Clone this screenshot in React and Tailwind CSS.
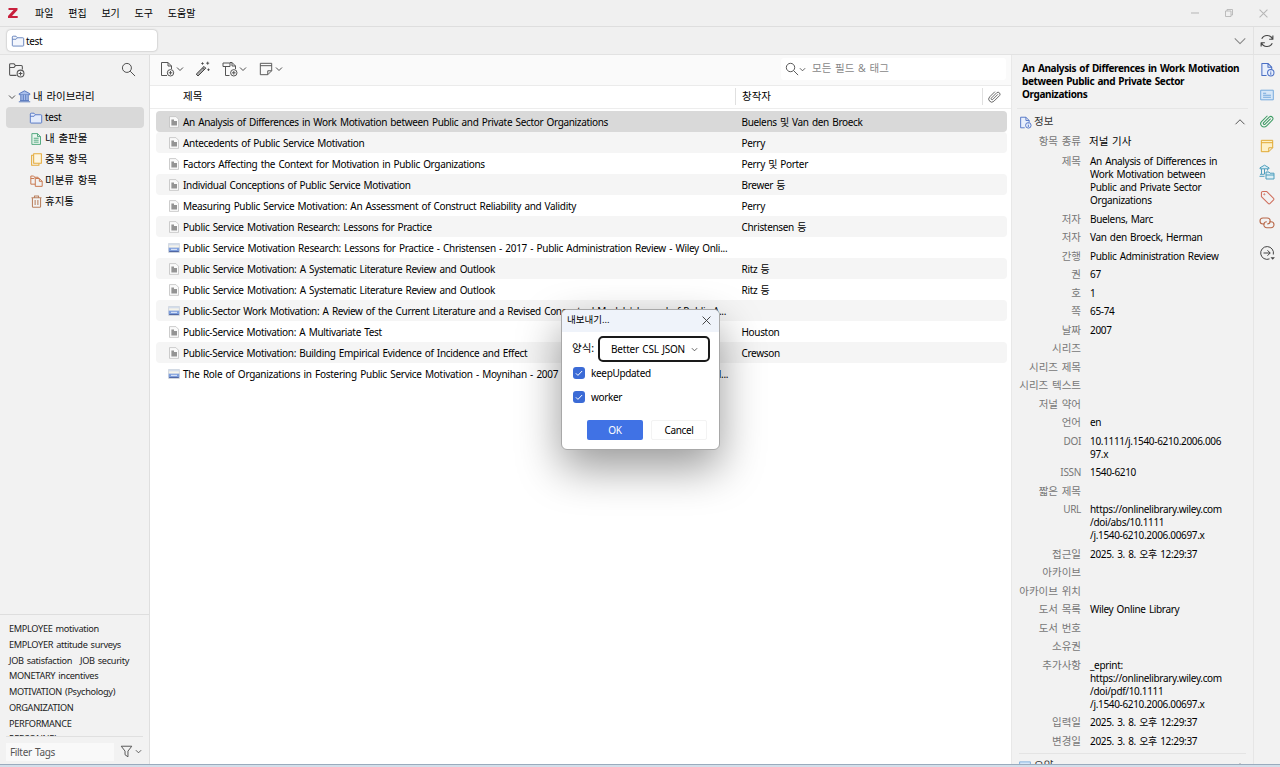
import React from 'react'

const ITEMS = [
    { title: 'An Analysis of Differences in Work Motivation between Public and Private Sector Organizations', creator: 'Buelens 및 Van den Broeck', selected: true },
    { title: 'Antecedents of Public Service Motivation', creator: 'Perry' },
    { title: 'Factors Affecting the Context for Motivation in Public Organizations', creator: 'Perry 및 Porter' },
    { title: 'Individual Conceptions of Public Service Motivation', creator: 'Brewer 등' },
    { title: 'Measuring Public Service Motivation: An Assessment of Construct Reliability and Validity', creator: 'Perry' },
    { title: 'Public Service Motivation Research: Lessons for Practice', creator: 'Christensen 등' },
    { title: 'Public Service Motivation Research: Lessons for Practice - Christensen - 2017 - Public Administration Review - Wiley Onli...', creator: '', web: true, spacing: 'tracking-[-0.300px]' },
    { title: 'Public Service Motivation: A Systematic Literature Review and Outlook', creator: 'Ritz 등' },
    { title: 'Public Service Motivation: A Systematic Literature Review and Outlook', creator: 'Ritz 등' },
    { title: 'Public-Sector Work Motivation: A Review of the Current Literature and a Revised Conceptual Model | Journal of Public A...', creator: '', web: true },
    { title: 'Public-Service Motivation: A Multivariate Test', creator: 'Houston' },
    { title: 'Public-Service Motivation: Building Empirical Evidence of Incidence and Effect', creator: 'Crewson' },
    { title: 'The Role of Organizations in Fostering Public Service Motivation - Moynihan - 2007 - Public Administration Review - Wil...', creator: '', web: true, spacing: 'tracking-[-0.275px]' },
]

const FIELDS = [
    ['제목', ['An Analysis of Differences in', 'Work Motivation between', 'Public and Private Sector', 'Organizations']],
    ['저자', ['Buelens, Marc']],
    ['저자', ['Van den Broeck, Herman']],
    ['간행', ['Public Administration Review']],
    ['권', ['67']],
    ['호', ['1']],
    ['쪽', ['65-74']],
    ['날짜', ['2007']],
    ['시리즈', ['']],
    ['시리즈 제목', ['']],
    ['시리즈 텍스트', ['']],
    ['저널 약어', ['']],
    ['언어', ['en']],
    ['DOI', ['10.1111/j.1540-6210.2006.006', '97.x']],
    ['ISSN', ['1540-6210']],
    ['짧은 제목', ['']],
    ['URL', ['https://onlinelibrary.wiley.com', '/doi/abs/10.1111', '/j.1540-6210.2006.00697.x']],
    ['접근일', ['2025. 3. 8. 오후 12:29:37']],
    ['아카이브', ['']],
    ['아카이브 위치', ['']],
    ['도서 목록', ['Wiley Online Library']],
    ['도서 번호', ['']],
    ['소유권', ['']],
    ['추가사항', ['_eprint:', 'https://onlinelibrary.wiley.com', '/doi/pdf/10.1111', '/j.1540-6210.2006.00697.x']],
    ['입력일', ['2025. 3. 8. 오후 12:29:37']],
    ['변경일', ['2025. 3. 8. 오후 12:29:37']],
]

const TAG_ROWS = [
    ['EMPLOYEE motivation'],
    ['EMPLOYER attitude surveys'],
    ['JOB satisfaction', 'JOB security'],
    ['MONETARY incentives'],
    ['MOTIVATION (Psychology)'],
    ['ORGANIZATION'],
    ['PERFORMANCE'],
    ['PERSONNEL'],
]

/* Icons */
const Svg = ({ size = 16, className = '', children }) => (
    <svg width={size} height={size} viewBox="0 0 16 16" fill="none" stroke="currentColor" strokeWidth="1" strokeLinejoin="round" className={`shrink-0 ${className}`}>
        {children}
    </svg>
)

const Chevron = ({ className = 'text-[#444]', size = 8 }) => (
    <Svg size={size} className={className}><path d="M2 5l6 6 6-6" strokeWidth={size > 10 ? 1.2 : 1.9} /></Svg>
)

const Folder = ({ className, fill = '#e3ebfb' }) => (
    <Svg size={14} className={className}>
        <path d="M1.500 13V3.500a1 1 0 011-1h3.200l1.600 1.800h6.200a1 1 0 011 1V13a.800.800 0 01-.800.800H2.300a.800.800 0 01-.800-.800z" fill={fill} />
        <path d="M1.500 6h4.300l1.500-1.700" />
    </Svg>
)

const NewCollection = () => (
    <Svg size={17} className="text-[#555]">
        <path d="M8 13.500H2.500a1 1 0 01-1-1v-9a1 1 0 011-1h3L7 4.300h5.500a1 1 0 011 1V8M1.500 6.200h4L7 4.300" />
        <circle cx="11.800" cy="11.800" r="3.200" />
        <path d="M11.800 10v3.600M10 11.800h3.600" />
    </Svg>
)

const Search = ({ size = 16 }) => (
    <Svg size={size} className="text-[#444]"><circle cx="6.300" cy="6.300" r="4.800" /><path d="M9.800 9.800l5.200 5.200" /></Svg>
)

const Library = () => (
    <Svg size={13} className="text-[#5878bd]">
        <path d="M1.500 4.500L8 1l6.500 3.500v1.300h-13z" fill="#a9bfec" strokeWidth="1.200" />
        <path d="M3 5.800h10v7.400H3z" fill="#a9bfec" stroke="none" />
        <path d="M1 14.500h14M2.500 13h11M3.500 5.800V13M6.500 5.800V13M9.500 5.800V13M12.500 5.800V13" strokeWidth="1.200" />
    </Svg>
)

const Publications = () => (
    <Svg size={12} className="text-[#46a376]">
        <path d="M2.500.800h7.500l4 4v10.400H2.500zM10 .800v4h4" fill="#eaf6ef" strokeWidth="1.200" />
        <path d="M5 7h6.500M5 9.600h6.500M5 12.200h6.500" strokeWidth="1.200" />
    </Svg>
)

const Duplicates = () => (
    <Svg size={13} className="text-[#e5ac3c]">
        <path d="M4.500 2.700H2V15h9v-2.300" strokeWidth="1.300" />
        <path d="M4.500 1H14v11.700H4.500z" fill="#fdf6e2" strokeWidth="1.300" />
    </Svg>
)

const Unfiled = () => (
    <Svg size={13} className="text-[#c9764c]">
        <path d="M6.500 12.500H1V2.500h3.500L6 4h4v1M1 5.500h4L6 4M6.500 5.500h5L15 9v6.200H6.500zM11.500 5.500V9H15" strokeWidth="1.200" />
    </Svg>
)

const Trash = () => (
    <Svg size={13} className="text-[#b9805f]">
        <path d="M1.800 3.500h12.400M5.500 3.500V1.300h5v2.200M3 3.500V14a1 1 0 001 1h8a1 1 0 001-1V3.500M6.300 6.200v6M9.700 6.200v6" strokeWidth="1.300" />
    </Svg>
)

const NewItem = () => (
    <Svg className="text-[#555]">
        <path d="M8 14.500H2.500v-13H9L12.500 5v3M9 1.500V5h3.500" />
        <circle cx="11.500" cy="11.800" r="3.200" />
        <path d="M11.500 10v3.600M9.700 11.800h3.600" />
    </Svg>
)

const Wand = () => (
    <Svg className="text-[#444]">
        <path d="M1.200 13.200L9 5.400 10.800 7.200 3 15zM7.500 6.900l1.800 1.800" fill="#aaa" />
        <path d="M7.500 1.300v2.400M6.300 2.500h2.400M12.700.700v3M11.200 2.200h3M13.500 7.500v2.400M12.300 8.700h2.400" strokeWidth=".9" />
    </Svg>
)

const AddAttachment = () => (
    <Svg className="text-[#555]">
        <path d="M3.500 5.500v9h4M8 1.500h2L13.500 5v3M10 1.500V5h3.500M1 2h7v3.500H1z" />
        <circle cx="11.800" cy="11.800" r="3.200" />
        <path d="M11.800 10v3.600M10 11.800h3.600" />
    </Svg>
)

const Note = ({ className = 'text-[#555]', fill = 'none', size = 14 }) => (
    <Svg size={size} className={className}>
        <path d="M1.500 1.500h13V10L10 14.500H1.500zM14.500 10H10v4.500M1.500 4.200h13" fill={fill} strokeWidth="1.100" />
    </Svg>
)

const Article = () => (
    <Svg size={12} className="text-[#bdbdbd]">
        <path d="M2 .800h8.500L14 4.300v10.900H2z" fill="#fafafa" />
        <path d="M4.500 4.500H8v2h4v6.200H4.500z" fill="#949494" stroke="none" />
    </Svg>
)

const WebPage = () => (
    <Svg size={12} className="text-[#c3cbd6]">
        <path d="M.800 2h14.400v12H.800z" fill="#f6f4ea" />
        <path d="M.800 2h14.400v2.500H.800z" fill="#d3dcea" stroke="none" />
        <path d="M1 7.500h14v5H1z" fill="#7f9fdc" stroke="none" />
        <path d="M1.500 12.700h13" stroke="#4b62a0" strokeWidth="1.300" />
        <path d="M4 9.800h8" stroke="#e8effc" strokeWidth="1.300" />
    </Svg>
)

const Clip = ({ className, size = 14 }) => (
    <Svg size={size} className={className}>
        <path d="M12.200 5.300l-6.300 6.300a1.200 1.200 0 01-1.700-1.700l6.600-6.600a2.500 2.500 0 013.500 3.500l-7 7a3.700 3.700 0 01-5.300-5.300l6.500-6.500" strokeWidth="1.200" />
    </Svg>
)

const Info = ({ size = 15 }) => (
    <Svg size={size} className="text-[#4a6fc4]">
        <path d="M7 14.500H2v-13h6.500l4 4V8M8.500 1.500v4h4" fill="#e8effc" strokeWidth="1.100" />
        <circle cx="11.500" cy="11.500" r="3.400" fill="#e8effc" strokeWidth="1.100" />
        <path d="M11.500 11v2.500M11.500 9.300v.9" strokeWidth="1.100" />
    </Svg>
)

const Abstract = ({ size = 14 }) => (
    <Svg size={size} className="text-[#72a8dc]">
        <path d="M.800 2.500h14.400v11H.800z" fill="#d6e7f8" strokeWidth="1.100" />
        <path d="M3.500 6h3.500M3.500 8.300h9M3.500 10.600h9" strokeWidth="1.100" />
    </Svg>
)

const LibrariesCollections = () => (
    <Svg size={16} className="text-[#4f9fbd]">
        <path d="M1 3.800L5.500 1.200 10 3.800v1H1zM2.500 5v5M5.500 5v5M8.500 5v1.500M1 10.300h4.500M.500 12.300h5" fill="#dbeef5" />
        <path d="M7 15V8h3l1 1.200h4V15zM7 11h8" fill="#dbeef5" />
    </Svg>
)

const Tag = () => (
    <Svg size={15} className="text-[#cf6e5c]">
        <path d="M1.500 3a1.500 1.500 0 011.500-1.500h4L14.500 9a1 1 0 010 1.500l-4 4a1 1 0 01-1.500 0L1.500 7z" strokeWidth="1.100" />
        <circle cx="4.600" cy="4.600" r=".600" />
    </Svg>
)

const Related = () => (
    <Svg size={16} className="text-[#b9694a]">
        <path d="M5.500 9H4a3 3 0 010-6h4.200a3 3 0 010 6" strokeWidth="1.100" />
        <path d="M10.500 6.700H12a3 3 0 010 6H7.800a3 3 0 010-6" strokeWidth="1.100" />
    </Svg>
)

const Locate = () => (
    <Svg size={16} className="text-[#444]">
        <path d="M10.500 13.900A6.400 6.400 0 1114.300 9.500" />
        <path d="M4.500 8h6.700M8.500 5.300L11.200 8l-2.700 2.700" />
        <path d="M11.500 12.300h4.400l-2.200 2.400z" fill="currentColor" stroke="none" />
    </Svg>
)

const Sync = () => (
    <Svg size={14} className="text-[#444]">
        <path d="M14.300 6A6.700 6.700 0 002 5.500M1.700 10A6.700 6.700 0 0014 10.500M14.700 1.800V6h-4.200M1.300 14.200V10h4.200" strokeWidth="1.300" />
    </Svg>
)

const Filter = () => (
    <Svg size={13} className="text-[#555]"><path d="M1.500 1.500h13L9.800 7.500v7L6.200 12V7.500z" strokeWidth="1.200" /></Svg>
)

const MenuBar = () => (
    <div className="flex h-[27px] shrink-0 items-center border-b border-[#dedede] bg-[#f0f0f0]">
        <svg width="10" height="10" viewBox="0 0 10 10" className="ml-[8px] shrink-0" fill="#c8203c">
            <path d="M.500 0h9v2L4 8h5.700v2H0V8l5.500-6h-5z" />
        </svg>
        <div className="ml-[17px] flex gap-[14.800px] tracking-normal">
            <span>파일</span>
            <span>편집</span>
            <span>보기</span>
            <span>도구</span>
            <span>도움말</span>
        </div>
        <div className="mr-[12px] ml-auto flex items-center gap-[26px] text-[#b5b5b5]">
            <Svg size={8}><path d="M0 8h16" strokeWidth="2" /></Svg>
            <Svg size={8}><path d="M1 4h11v11H1zM4 4V1h11v11h-3" strokeWidth="1.800" /></Svg>
            <Svg size={9}><path d="M1 1l14 14M15 1L1 15" strokeWidth="1.800" /></Svg>
        </div>
    </div>
)

const TabBar = () => (
    <div className="flex h-[28px] shrink-0 border-b border-[#e2e2e2] bg-[#f0f0f0]">
        <div className="mt-[3px] ml-[7px] flex h-[21px] w-[150px] items-center rounded-[4px] bg-white pl-[4px] shadow-[0_0_2px_rgba(0,0,0,0.35)]">
            <Folder className="text-[#5d7cb8]" fill="#f3f6fd" />
            <span className="ml-[1px] pt-[1px]">test</span>
        </div>
        <div className="ml-auto flex items-center pr-[6px]"><Chevron size={14} className="text-[#888]" /></div>
        <div className="flex w-[27px] items-center justify-center border-l border-[#e2e2e2]"><Sync /></div>
    </div>
)

const TreeRow = ({ icon, label, selected }) => (
    <div className={`mr-[5px] ml-[6px] flex h-[21px] items-center rounded-[4px] pl-[23px] ${selected ? 'bg-[#d9d9d9]' : 'text-[10.500px] tracking-normal'}`}>
        <span className="flex w-[14px] justify-center">{icon}</span>
        <span className="ml-[2px]">{label}</span>
    </div>
)

const Sidebar = () => (
    <div className="flex w-[150px] shrink-0 flex-col border-r border-[#dfdfdf] bg-[#f2f2f2]">
        <div className="flex h-[30px] items-center justify-between pr-[13px] pb-[1px] pl-[8px]">
            <NewCollection />
            <Search size={15} />
        </div>
        <div className="mt-[1px] flex h-[21px] items-center pl-[8px] text-[10.500px] tracking-normal">
            <Chevron />
            <span className="ml-[2px]"><Library /></span>
            <span className="ml-[2px]">내 라이브러리</span>
        </div>
        <TreeRow icon={<Folder className="text-[#4a6fc4]" />} label="test" selected />
        <TreeRow icon={<Publications />} label="내 출판물" />
        <TreeRow icon={<Duplicates />} label="중복 항목" />
        <TreeRow icon={<Unfiled />} label="미분류 항목" />
        <TreeRow icon={<Trash />} label="휴지통" />

        <div className="mt-auto h-[122px] overflow-hidden border-t border-[#dedede] pt-[6px] pl-[9px] text-[9.200px] leading-[15.750px] text-[#222]">
            {TAG_ROWS.map((row, i) => (
                <div key={i} className="flex gap-[8px] whitespace-nowrap">
                    {row.map(tag => <span key={tag}>{tag}</span>)}
                </div>
            ))}
        </div>
        <div className="mx-[6px] flex h-[28px] items-center border-t border-[#e0e0e0] pt-[2px]">
            <div className="flex h-[18px] w-[108px] items-center bg-[#f9f9f9] pt-[1px] pl-[4px] text-[#555]">Filter Tags</div>
            <span className="ml-[6px]"><Filter /></span>
            <span className="ml-[2px]"><Chevron size={7} /></span>
        </div>
    </div>
)

const ItemsToolbar = () => (
    <div className="flex h-[31px] shrink-0 items-center border-b border-[#ebebeb] bg-[#fafafa] pb-[2px] pl-[9px]">
        <NewItem /><span className="ml-[1px]"><Chevron /></span>
        <span className="ml-[11px]"><Wand /></span>
        <span className="ml-[11px]"><AddAttachment /></span><span className="ml-[1px]"><Chevron /></span>
        <span className="ml-[12px]"><Note /></span><span className="ml-[2px]"><Chevron /></span>
        <div className="mr-[5px] ml-auto flex h-[22px] w-[225px] items-center rounded-[3px] bg-white pl-[4px]">
            <Search size={14} />
            <span><Chevron size={7} /></span>
            <span className="ml-[6px] text-[10.500px] tracking-normal text-[#888]">모든 필드 & 태그</span>
        </div>
    </div>
)

const ItemsList = () => (
    <div className="flex min-w-0 flex-1 flex-col border-r border-[#e8e8e8] bg-white">
        <ItemsToolbar />
        <div className="flex h-[23px] shrink-0 items-center border-b border-[#ededed] pb-[1px] text-[10.500px] tracking-normal">
            <span className="w-[585px] pl-[33px]">제목</span>
            <span className="flex h-[17px] w-[247px] items-center border-l border-[#e0e0e0] pl-[6px]">창작자</span>
            <span className="flex h-[17px] items-center border-l border-[#e0e0e0] pl-[5px]"><Clip size={13} className="text-[#666]" /></span>
        </div>
        <div className="mt-[2px] pr-[4px] pl-[6px]">
            {ITEMS.map((item, i) => (
                <div key={i} className={`flex h-[21px] items-center rounded-[4px] ${item.selected ? 'bg-[#d9d9d9]' : i % 2 ? 'bg-[#f5f5f5]' : ''}`}>
                    <span className="ml-[12px]">{item.web ? <WebPage /> : <Article />}</span>
                    <span className={`ml-[3px] w-[558.500px] pt-[2px] whitespace-nowrap ${item.spacing || ''}`}>{item.title}</span>
                    <span className="pt-[2px] whitespace-nowrap">{item.creator}</span>
                </div>
            ))}
        </div>
    </div>
)

const ItemPane = () => (
    <div className="flex w-[241px] shrink-0 flex-col overflow-hidden bg-[#f2f2f2]">
        <div className="mx-[5px] h-[54px] shrink-0 border-b border-[#e6e6e6] pt-[7px] pl-[5px] leading-[13px] font-bold tracking-[-0.370px] whitespace-nowrap text-black">
            <div>An Analysis of Differences in Work Motivation</div>
            <div>between Public and Private Sector</div>
            <div>Organizations</div>
        </div>
        <div className="flex h-[26px] shrink-0 items-center pr-[7px] pl-[7px]">
            <Info size={13} />
            <span className="ml-[2px] text-[10.500px] tracking-normal text-[#333]">정보</span>
            <Chevron size={12} className="ml-auto rotate-180 text-[#444]" />
        </div>
        <div className="flex h-[20px] shrink-0 text-[10.500px] leading-[13px] tracking-normal">
            <span className="w-[69px] text-right text-[#777]">항목 종류</span>
            <span className="ml-[8px]">저널 기사</span>
        </div>
        {FIELDS.map(([label, lines], i) => (
            <div key={i} className="flex shrink-0 pb-[5.500px] leading-[13px]">
                <span className={`w-[69px] shrink-0 text-right whitespace-nowrap text-[#777] ${/[A-Z]/.test(label) ? '' : 'text-[10.500px] tracking-normal'}`}>{label}</span>
                <div className="ml-[9px] min-h-[13px]">
                    {lines.map(line => <div key={line} className="whitespace-nowrap">{line}</div>)}
                </div>
            </div>
        ))}
        <div className="mx-[7px] flex h-[24px] shrink-0 items-center border-t border-[#e4e4e4]">
            <Abstract size={12} />
            <span className="ml-[3px] text-[10.500px] tracking-normal text-[#333]">요약</span>
            <Chevron size={12} className="ml-auto rotate-180 text-[#444]" />
        </div>
    </div>
)

const SideNav = () => (
    <div className="flex w-[27px] shrink-0 flex-col items-center border-l border-[#e6e6e6] bg-[#f2f2f2] pt-[2px]">
        {[Info, Abstract, () => <Clip className="text-[#3d9c64]" />, () => <Note className="text-[#e0a72e]" fill="#fdf0c8" />, LibrariesCollections, Tag, Related].map((Icon, i) => (
            <div key={i} className="flex h-[25.500px] shrink-0 items-center justify-center"><Icon /></div>
        ))}
        <div className="mt-[5px] flex h-[25px] items-center"><Locate /></div>
    </div>
)

const Checkbox = ({ label }) => (
    <div className="flex h-[24px] items-center">
        <span className="flex size-[12px] items-center justify-center rounded-[3px] bg-[#3b6bd6]">
            <Svg size={10} className="text-white"><path d="M3 8.500l3.300 3.300L13 4.800" strokeWidth="1.600" /></Svg>
        </span>
        <span className="ml-[6px]">{label}</span>
    </div>
)

const ExportDialog = () => (
    <div className="absolute top-[309px] left-[561px] h-[141px] w-[159px] rounded-[6px] border border-[#a8a8a8] bg-white shadow-[0_18px_44px_rgba(0,0,0,0.4)]">
        <div className="flex h-[22px] items-center justify-between rounded-t-[5px] bg-[#eff3fa] pr-[8px] pb-[1px] pl-[5px]">
            <span className="text-[9.500px] tracking-normal">내보내기...</span>
            <Svg size={9} className="text-[#333]"><path d="M1 1l14 14M15 1L1 15" strokeWidth="1.600" /></Svg>
        </div>
        <div className="mt-[4px] flex items-center pl-[10px]">
            <span className="w-[26px] text-[10.500px] tracking-normal">양식:</span>
            <div className="flex h-[26px] w-[112px] items-center rounded-[5px] border-2 border-[#1a1a1a] pl-[11px]">
                <span className="w-[78px] tracking-[-0.200px]">Better CSL JSON</span>
                <span className="ml-[2px]"><Chevron size={7} /></span>
            </div>
        </div>
        <div className="-mt-[1px] pl-[11px]">
            <Checkbox label="keepUpdated" />
            <Checkbox label="worker" />
        </div>
        <div className="mt-[11px] ml-[25px] flex gap-[8px]">
            <button className="h-[20px] w-[56px] rounded-[2px] bg-[#4072e5] text-white">OK</button>
            <button className="h-[20px] w-[56px] rounded-[2px] border border-[#f3f3f3] bg-white">Cancel</button>
        </div>
    </div>
)

const App = () => {
    return (
        <div className="relative flex h-[767px] w-[1280px] flex-col overflow-hidden bg-[#f2f2f2] font-['Noto_Sans','Noto_Sans_CJK_KR',sans-serif] text-[10px] tracking-[-0.330px] text-black [word-spacing:1px]">
            <MenuBar />
            <TabBar />
            <div className="flex min-h-0 flex-1">
                <Sidebar />
                <ItemsList />
                <ItemPane />
                <SideNav />
            </div>
            <div className="h-[3px] shrink-0 border-t border-[#9aabbd] bg-[#d3dfea]"></div>
            <ExportDialog />
        </div>
    )
}

export default App
